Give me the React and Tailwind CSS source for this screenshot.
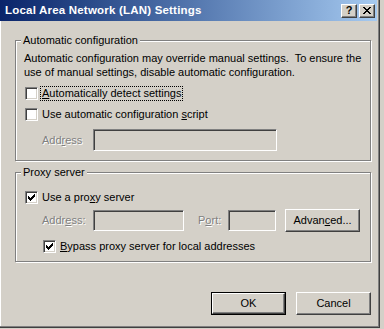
import React from 'react';

const font = { fontFamily: '"Liberation Sans", Arial, sans-serif' };

// classic win2k bevels
const sunken = 'border border-t-[#808080] border-l-[#808080] border-r-white border-b-white shadow-[inset_1px_1px_0_#404040,inset_-1px_-1px_0_#d4d0c8]';
const raised = 'border border-t-white border-l-white border-r-[#404040] border-b-[#404040] shadow-[inset_-1px_-1px_0_#808080]';

function Check() {
  // 7x7 pixel tick
  const px = [
    [6, 0], [5, 1], [6, 1], [0, 2], [4, 2], [5, 2], [6, 2],
    [0, 3], [1, 3], [3, 3], [4, 3], [5, 3], [0, 4], [1, 4], [2, 4], [3, 4], [4, 4],
    [1, 5], [2, 5], [3, 5], [2, 6],
  ];
  return (
    <svg width="7" height="7" viewBox="0 0 7 7" shapeRendering="crispEdges">
      {px.map(([x, y]) => <rect key={x + '-' + y} x={x} y={y} width="1" height="1" fill="#000" />)}
    </svg>
  );
}

function Checkbox({ checked }) {
  return (
    <div className={`w-[13px] h-[13px] shrink-0 bg-white flex items-center justify-center ${sunken}`}>
      {checked && <Check />}
    </div>
  );
}

function GroupBox({ label, className, children }) {
  return (
    <div className={`relative border border-[#808080] shadow-[inset_1px_1px_0_#fff,1px_1px_0_#fff] ${className}`}>
      <span className="absolute -top-[8px] left-[5px] bg-[#d4d0c8] px-[2px] leading-[14px] text-black">{label}</span>
      {children}
    </div>
  );
}

function Disabled({ children, className = '' }) {
  return <span className={`text-[#808080] [text-shadow:1px_1px_0_#fff] ${className}`}>{children}</span>;
}

function Button({ children, isDefault }) {
  if (isDefault) {
    return (
      <div className="w-[75px] h-[23px] border border-black">
        <div className={`w-full h-full flex items-center justify-center ${raised}`}>{children}</div>
      </div>
    );
  }
  return <div className={`w-[75px] h-[23px] flex items-center justify-center ${raised}`}>{children}</div>;
}

export default function App() {
  return (
    <div className="w-[384px] h-[329px] bg-[#d4d0c8] text-[11px] text-black" style={font}>
      <div className="w-[380px] h-[328px] flex flex-col border-r border-b border-[#404040] shadow-[inset_-1px_-1px_0_#808080,inset_1px_0_0_#fff]">
        {/* title bar */}
        <div className="h-[21px] mr-[2px] flex items-center bg-gradient-to-r from-[#0a246a] to-[#a6caf0] pl-[5px] pr-[2px]">
          <span className="flex-1 font-bold text-white text-[11.5px] tracking-[0.2px]">Local Area Network (LAN) Settings</span>
          <div className={`w-[16px] h-[14px] flex items-center justify-center bg-[#d4d0c8] font-bold text-[11px] leading-none ${raised}`}>?</div>
          <div className={`ml-[2px] w-[16px] h-[14px] flex items-center justify-center bg-[#d4d0c8] ${raised}`}>
            <svg width="8" height="7" viewBox="0 0 8 7" shapeRendering="crispEdges">
              <path d="M0 0h2v1h-2zM6 0h2v1h-2zM1 1h2v1h-2zM5 1h2v1h-2zM2 2h4v1h-4zM3 3h2v1h-2zM2 4h4v1h-4zM1 5h2v1h-2zM5 5h2v1h-2zM0 6h2v1h-2zM6 6h2v1h-2z" fill="#000" />
            </svg>
          </div>
        </div>

        {/* automatic configuration */}
        <GroupBox label="Automatic configuration" className="ml-[15px] mt-[19px] w-[356px] h-[121px]">
          <div className="pl-[8px] pt-[10px] flex flex-col">
            <p className="leading-[14px]">
              Automatic configuration may override manual settings.&nbsp; To ensure the
              <br />
              use of manual settings, disable automatic configuration.
            </p>
            <div className="mt-[8px] ml-[1px] flex items-center h-[13px]">
              <Checkbox />
              <span className="ml-[3px] px-[1px] leading-[13px] outline outline-1 outline-dotted outline-black">
                <u>A</u>utomatically detect settings
              </span>
            </div>
            <div className="mt-[8px] ml-[1px] flex items-center h-[13px]">
              <Checkbox />
              <span className="ml-[4px]">Use automatic configuration <u>s</u>cript</span>
            </div>
            <div className="mt-[8px] ml-[18px] flex items-center">
              <Disabled className="w-[51px]">Add<u>r</u>ess</Disabled>
              <div className={`w-[184px] h-[22px] ${sunken}`} />
            </div>
          </div>
        </GroupBox>

        {/* proxy server */}
        <GroupBox label="Proxy server" className="ml-[15px] mt-[11px] w-[356px] h-[90px]">
          <div className="pl-[9px] pt-[18px] flex flex-col">
            <div className="flex items-center h-[13px]">
              <Checkbox checked />
              <span className="ml-[4px]">Use a pro<u>x</u>y server</span>
            </div>
            <div className="mt-[4px] ml-[17px] flex items-center h-[24px]">
              <Disabled className="w-[51px]">Addr<u>e</u>ss:</Disabled>
              <div className={`w-[91px] h-[21px] ${sunken}`} />
              <Disabled className="ml-[14px] w-[30px]">P<u>o</u>rt:</Disabled>
              <div className={`w-[48px] h-[21px] ${sunken}`} />
              <div className="ml-[9px]">
                <Button>Advan<u>c</u>ed...</Button>
              </div>
            </div>
            <div className="mt-[8px] ml-[18px] flex items-center h-[13px]">
              <Checkbox checked />
              <span className="ml-[4px]"><u>B</u>ypass proxy server for local addresses</span>
            </div>
          </div>
        </GroupBox>

        {/* dialog buttons */}
        <div className="mt-[30px] w-[371px] flex justify-end gap-[10px]">
          <Button isDefault>OK</Button>
          <Button>Cancel</Button>
        </div>
      </div>
    </div>
  );
}
